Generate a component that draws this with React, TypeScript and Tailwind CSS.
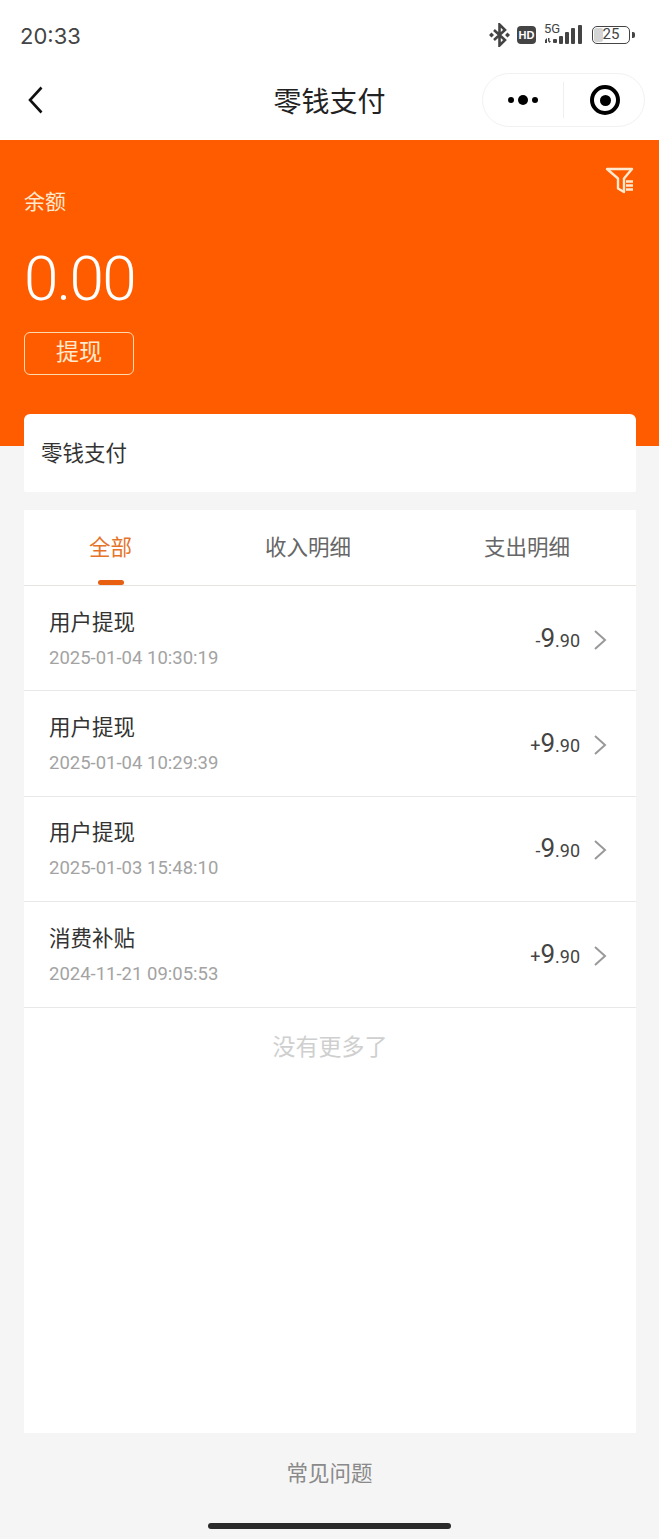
const cjk = `font-['Roboto','Noto_Sans_CJK_SC',sans-serif]`;

const records = [
  { title: '用户提现', time: '2025-01-04 10:30:19', sign: '-' },
  { title: '用户提现', time: '2025-01-04 10:29:39', sign: '+' },
  { title: '用户提现', time: '2025-01-03 15:48:10', sign: '-' },
  { title: '消费补贴', time: '2024-11-21 09:05:53', sign: '+' },
];

function StatusIcons() {
  return (
    <div className="flex items-center">
      {/* bluetooth */}
      <svg width="23" height="24" viewBox="0 0 23 24" fill="none" stroke="#444" strokeWidth="2.600" className="mr-[6px]">
        <path d="M6 7l11 10-5.500 5.500V1.500L17 7 6 17" />
        <path d="M1 12l2.500-2.500L6 12l-2.500 2.500zM17 12l2.500-2.500L22 12l-2.500 2.500z" fill="#444" stroke="none" />
      </svg>
      <div className="w-[19px] h-[18px] mr-[8px] rounded-[4px] bg-[#444] text-white text-[11px] leading-[18px] font-bold text-center font-['Liberation_Sans',sans-serif]">HD</div>
      {/* 5G + signal */}
      <div className="relative w-[40px] h-[20px] mr-[8px]">
        <span className="absolute left-0 top-[-3px] text-[13px] leading-[14px] text-[#444] font-['Roboto',sans-serif]">5G</span>
        <svg width="40" height="20" viewBox="0 0 40 20" fill="#444" className="absolute left-0 top-0">
          <path d="M1 15l2-2v5H1zM4 13h1.500v3l1.500 0-1.500 2-1.500-2z" />
          <rect x="9" y="14" width="4" height="4" rx="1" />
          <rect x="15" y="11" width="4" height="8" rx="1" />
          <rect x="21" y="7" width="4" height="12" rx="1" />
          <rect x="27" y="3" width="4" height="16" rx="1" />
          <rect x="34" y="0" width="4" height="19" rx="1" />
        </svg>
      </div>
      {/* battery */}
      <div className="relative w-[38px] h-[18px] rounded-[5px] border-[1.5px] border-[#444] overflow-hidden">
        <div className="absolute left-[1px] top-[1px] bottom-[1px] w-[9px] rounded-[2px] bg-[#d4d4d4]" />
        <div className="relative text-[15px] leading-[15px] text-center text-[#444] font-['Roboto',sans-serif]">25</div>
      </div>
      <div className="w-[3px] h-[6px] ml-[2px] rounded-r-[2px] bg-[#444]" />
    </div>
  );
}

function Chevron({ dir }: { dir: 'left' | 'right' }) {
  return dir === 'left' ? (
    <svg width="18" height="30" viewBox="0 0 18 30" fill="none" stroke="#111" strokeWidth="2.600">
      <path d="M15.500 2.500L4 15l11.500 12.500" />
    </svg>
  ) : (
    <svg width="14" height="22" viewBox="0 0 14 22" fill="none" stroke="#999" strokeWidth="2">
      <path d="M2 2l10 9-10 9" />
    </svg>
  );
}

function Row({ title, time, sign }: { title: string; time: string; sign: string }) {
  return (
    <div className="h-[105.400px] border-b border-[#e8e8e8] flex items-center justify-between pl-[25px] pr-[29px]">
      <div className="mt-[1px]">
        <div className="text-[21.500px] leading-[30px] text-[#333]">{title}</div>
        <div className="mt-[8px] text-[18.500px] leading-[24px] text-[#a3a3a3]">{time}</div>
      </div>
      <div className="mt-[3px] flex items-center">
        <div className="text-[#444] leading-[30px]">
          <span className="text-[18px]">{sign}</span>
          <span className="text-[26px]">9</span>
          <span className="text-[18px]">.90</span>
        </div>
        <div className="ml-[13px] flex">
          <Chevron dir="right" />
        </div>
      </div>
    </div>
  );
}

export default function App() {
  return (
    <div className={`w-[659px] h-[1539px] overflow-hidden bg-[#f5f5f5] flex flex-col ${cjk}`}>
      {/* Status + nav */}
      <header className="h-[140px] shrink-0 bg-white">
        <div className="h-[70px] flex items-center justify-between pl-[20px] pr-[24px]">
          <span className="mt-[1px] text-[22px] leading-none text-[#444] font-['Inter',sans-serif]">20:33</span>
          <StatusIcons />
        </div>
        <div className="relative h-[70px] flex items-center justify-center">
          <div className="absolute left-[26px] top-[15px]">
            <Chevron dir="left" />
          </div>
          <h1 className="-mt-[4px] text-[28px] leading-[60px] text-[#222] font-normal">零钱支付</h1>
          <div className="absolute right-[14px] top-[3px] w-[163px] h-[54px] rounded-full border border-[#f1f1f1] flex items-center">
            <div className="w-[80px] flex items-center justify-center gap-[4px]">
              <span className="w-[6px] h-[6px] rounded-full bg-black" />
              <span className="w-[10px] h-[10px] rounded-full bg-black" />
              <span className="w-[6px] h-[6px] rounded-full bg-black" />
            </div>
            <div className="w-px h-[36px] bg-[#efefef]" />
            <div className="flex-1 pl-[2px] flex items-center justify-center">
              <div className="w-[30px] h-[30px] rounded-full border-[4px] border-black flex items-center justify-center">
                <div className="w-[11px] h-[11px] rounded-full bg-black" />
              </div>
            </div>
          </div>
        </div>
      </header>

      {/* Balance */}
      <section className="relative h-[306px] shrink-0 bg-[#ff5c00] px-[24px] pt-[49px] text-white">
        <svg width="30" height="28" viewBox="0 0 30 28" fill="none" stroke="#ffe9cf" strokeWidth="2.400" className="absolute right-[24px] top-[27px]">
          <path d="M2 2h25l-8 9.500V25l-6-3.500V11.500z" strokeLinejoin="round" />
          <path d="M21 14.500h7M21 18.500h7M21 22.500h7" />
        </svg>
        <div className="text-[21px] leading-[26px] text-[#ffe9cf]">余额</div>
        <div className="mt-[30px] text-[62px] leading-[68px] font-['Roboto',sans-serif] font-[350] tracking-[-1.800px]">0.00</div>
        <div className="mt-[19px] w-[110px] h-[43px] rounded-[6px] border border-[#ffd9ae] flex items-center justify-center text-[23px] text-[#ffe9cf]">
          提现
        </div>
      </section>

      {/* Account card */}
      <div className="relative -mt-[32px] ml-[24px] w-[612px] h-[78px] shrink-0 rounded-t-[6px] rounded-b-[2px] bg-white pl-[17px] pt-[3px] flex items-center text-[21.500px] text-[#333]">
        零钱支付
      </div>

      {/* Records */}
      <main className="mt-[18px] ml-[24px] w-[612px] h-[923px] shrink-0 bg-white">
        <div className="relative h-[76px] border-b border-[#e6e3e0] flex items-center justify-between pl-[65px] pr-[66px] pt-[1px] text-[21.500px] text-[#666]">
          <span className="text-[#e5742a]">全部</span>
          <span>收入明细</span>
          <span>支出明细</span>
          <div className="absolute left-[74px] bottom-0 w-[26px] h-[5px] rounded-full bg-[#e85f10]" />
        </div>
        {records.map((r, i) => (
          <Row key={i} {...r} />
        ))}
        <div className="mt-[23px] text-center text-[23px] leading-[34px] text-[#cfcfcf]">没有更多了</div>
      </main>

      {/* Footer */}
      <footer className="flex-1 flex flex-col items-center">
        <div className="mt-[25px] text-[21.500px] leading-[32px] text-[#8a8a8a]">常见问题</div>
        <div className="mt-[33px] w-[243px] h-[6px] rounded-full bg-[#2a2a2a]" />
      </footer>
    </div>
  );
}
